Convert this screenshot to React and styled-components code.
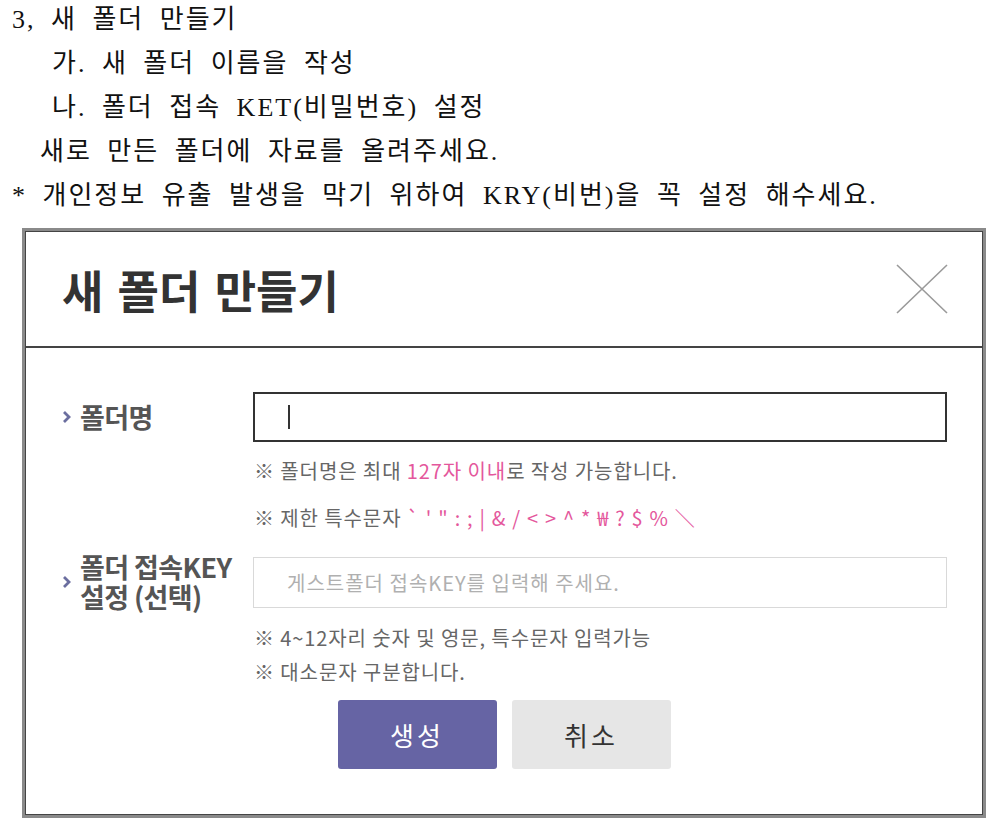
import React from 'react';
import styled, { createGlobalStyle } from 'styled-components';

const GlobalStyle = createGlobalStyle`
  html, body {
    margin: 0;
    padding: 0;
    background: #fff;
  }
  body {
    font-family: "Noto Sans CJK KR", "Noto Sans", sans-serif;
  }
`;

const Page = styled.div`
  width: 1000px;
  height: 825px;
  overflow: hidden;
`;

const Doc = styled.div`
  margin-top: -2px;
  padding-left: 12px;
  font-family: "Liberation Serif", "Noto Sans CJK KR", serif;
  font-size: 26px;
  line-height: 44px;
  letter-spacing: 2px;
  word-spacing: 7px;
  color: #111;
`;

const Line = styled.div`
  padding-left: ${(p) => p.indent || 0}px;
  white-space: nowrap;
`;

const Frame = styled.div`
  margin: 10px 0 0 22px;
  width: 964px;
  height: 590px;
  box-sizing: border-box;
  border: 3px solid #8a8a8a;
  box-shadow: inset 0 0 0 1px #444;
  padding: 1px;
  display: flex;
  flex-direction: column;
`;

const Header = styled.div`
  height: 114px;
  border-bottom: 2px solid #444;
  display: flex;
  align-items: center;
  justify-content: space-between;
  padding: 0 34px 0 36px;
`;

const Title = styled.h1`
  margin: 0;
  font-size: 45px;
  font-weight: 700;
  color: #333;
  letter-spacing: 0;
  word-spacing: 4px;
`;

const CloseButton = styled.button`
  border: 0;
  background: none;
  padding: 0;
  width: 52px;
  height: 52px;
  display: flex;
  align-items: center;
  justify-content: center;
`;

const Body = styled.div`
  padding: 44px 35px 0 36px;
  display: grid;
  grid-template-columns: 191px 694px;
`;

const Label = styled.div`
  display: flex;
  align-items: center;
  gap: 9px;
  height: ${(p) => p.h}px;
  margin-top: ${(p) => p.top || 0}px;
  font-size: 27px;
  font-weight: 700;
  line-height: 30px;
  color: #555;
  letter-spacing: -0.6px;
  white-space: nowrap;
`;

const Field = styled.div`
  display: flex;
  flex-direction: column;
  margin-top: ${(p) => p.top || 0}px;
`;

const InputBox = styled.div`
  box-sizing: border-box;
  height: ${(p) => (p.strong ? 50 : 51)}px;
  border: ${(p) => (p.strong ? '2px solid #333' : '1px solid #d9d9d9')};
  display: flex;
  align-items: center;
  padding-left: 33px;
  font-size: 20px;
  color: #b0b0b0;
  letter-spacing: 1px;
`;

const Caret = styled.span`
  display: block;
  width: 2px;
  height: 24px;
  background: #333;
`;

const Hint = styled.p`
  margin: ${(p) => p.top}px 0 0 1px;
  font-size: 20px;
  line-height: 24px;
  color: #666;
  letter-spacing: 0.9px;
  white-space: nowrap;
`;

const Pink = styled.span`
  color: #e4579c;
  letter-spacing: ${(p) => (p.wide ? '1.2px' : 'inherit')};
`;

const Buttons = styled.div`
  display: flex;
  justify-content: center;
  gap: 15px;
  margin-top: 16px;
`;

const Button = styled.button`
  width: 159px;
  height: 69px;
  border: 0;
  border-radius: 3px;
  font-family: "Noto Sans CJK KR", sans-serif;
  font-size: 26px;
  letter-spacing: 3px;
  background: ${(p) => (p.primary ? '#6664a4' : '#e6e6e6')};
  color: ${(p) => (p.primary ? '#fff' : '#333')};
`;

const Chevron = () => (
  <svg width="9" height="14" viewBox="0 0 9 14">
    <polyline points="2,2 7,7 2,12" fill="none" stroke="#6b6e9f" strokeWidth="2.8" />
  </svg>
);

const CloseIcon = () => (
  <svg width="52" height="52" viewBox="0 0 52 52">
    <path d="M1 2 L51 50 M51 2 L1 50" stroke="#9a9a9a" strokeWidth="1.6" fill="none" />
  </svg>
);

const App = () => {
  return (
    <Page>
      <GlobalStyle />
      <Doc>
        <Line>3, 새 폴더 만들기</Line>
        <Line indent={40}>가. 새 폴더 이름을 작성</Line>
        <Line indent={40}>나. 폴더 접속 KET(비밀번호) 설정</Line>
        <Line indent={28}>새로 만든 폴더에 자료를 올려주세요.</Line>
        <Line>* 개인정보 유출 발생을 막기 위하여 KRY(비번)을 꼭 설정 해수세요.</Line>
      </Doc>
      <Frame>
        <Header>
          <Title>새 폴더 만들기</Title>
          <CloseButton aria-label="닫기">
            <CloseIcon />
          </CloseButton>
        </Header>
        <Body>
          <Label h={50}>
            <Chevron />
            <span>폴더명</span>
          </Label>
          <Field>
            <InputBox strong>
              <Caret />
            </InputBox>
            <Hint top={17}>
              ※ 폴더명은 최대 <Pink>127자 이내</Pink>로 작성 가능합니다.
            </Hint>
            <Hint top={23}>
              ※ 제한 특수문자 <Pink wide>` ' " : ; | &amp; / &lt; &gt; ^ * ₩ ? $ % ＼</Pink>
            </Hint>
          </Field>
          <Label h={60} top={22}>
            <Chevron />
            <span>
              폴더 접속KEY
              <br />
              설정 (선택)
            </span>
          </Label>
          <Field top={27}>
            <InputBox>게스트폴더 접속KEY를 입력해 주세요.</InputBox>
            <Hint top={18}>※ 4~12자리 숫자 및 영문, 특수문자 입력가능</Hint>
            <Hint top={10}>※ 대소문자 구분합니다.</Hint>
          </Field>
        </Body>
        <Buttons>
          <Button primary>생성</Button>
          <Button>취소</Button>
        </Buttons>
      </Frame>
    </Page>
  );
};

export default App;
